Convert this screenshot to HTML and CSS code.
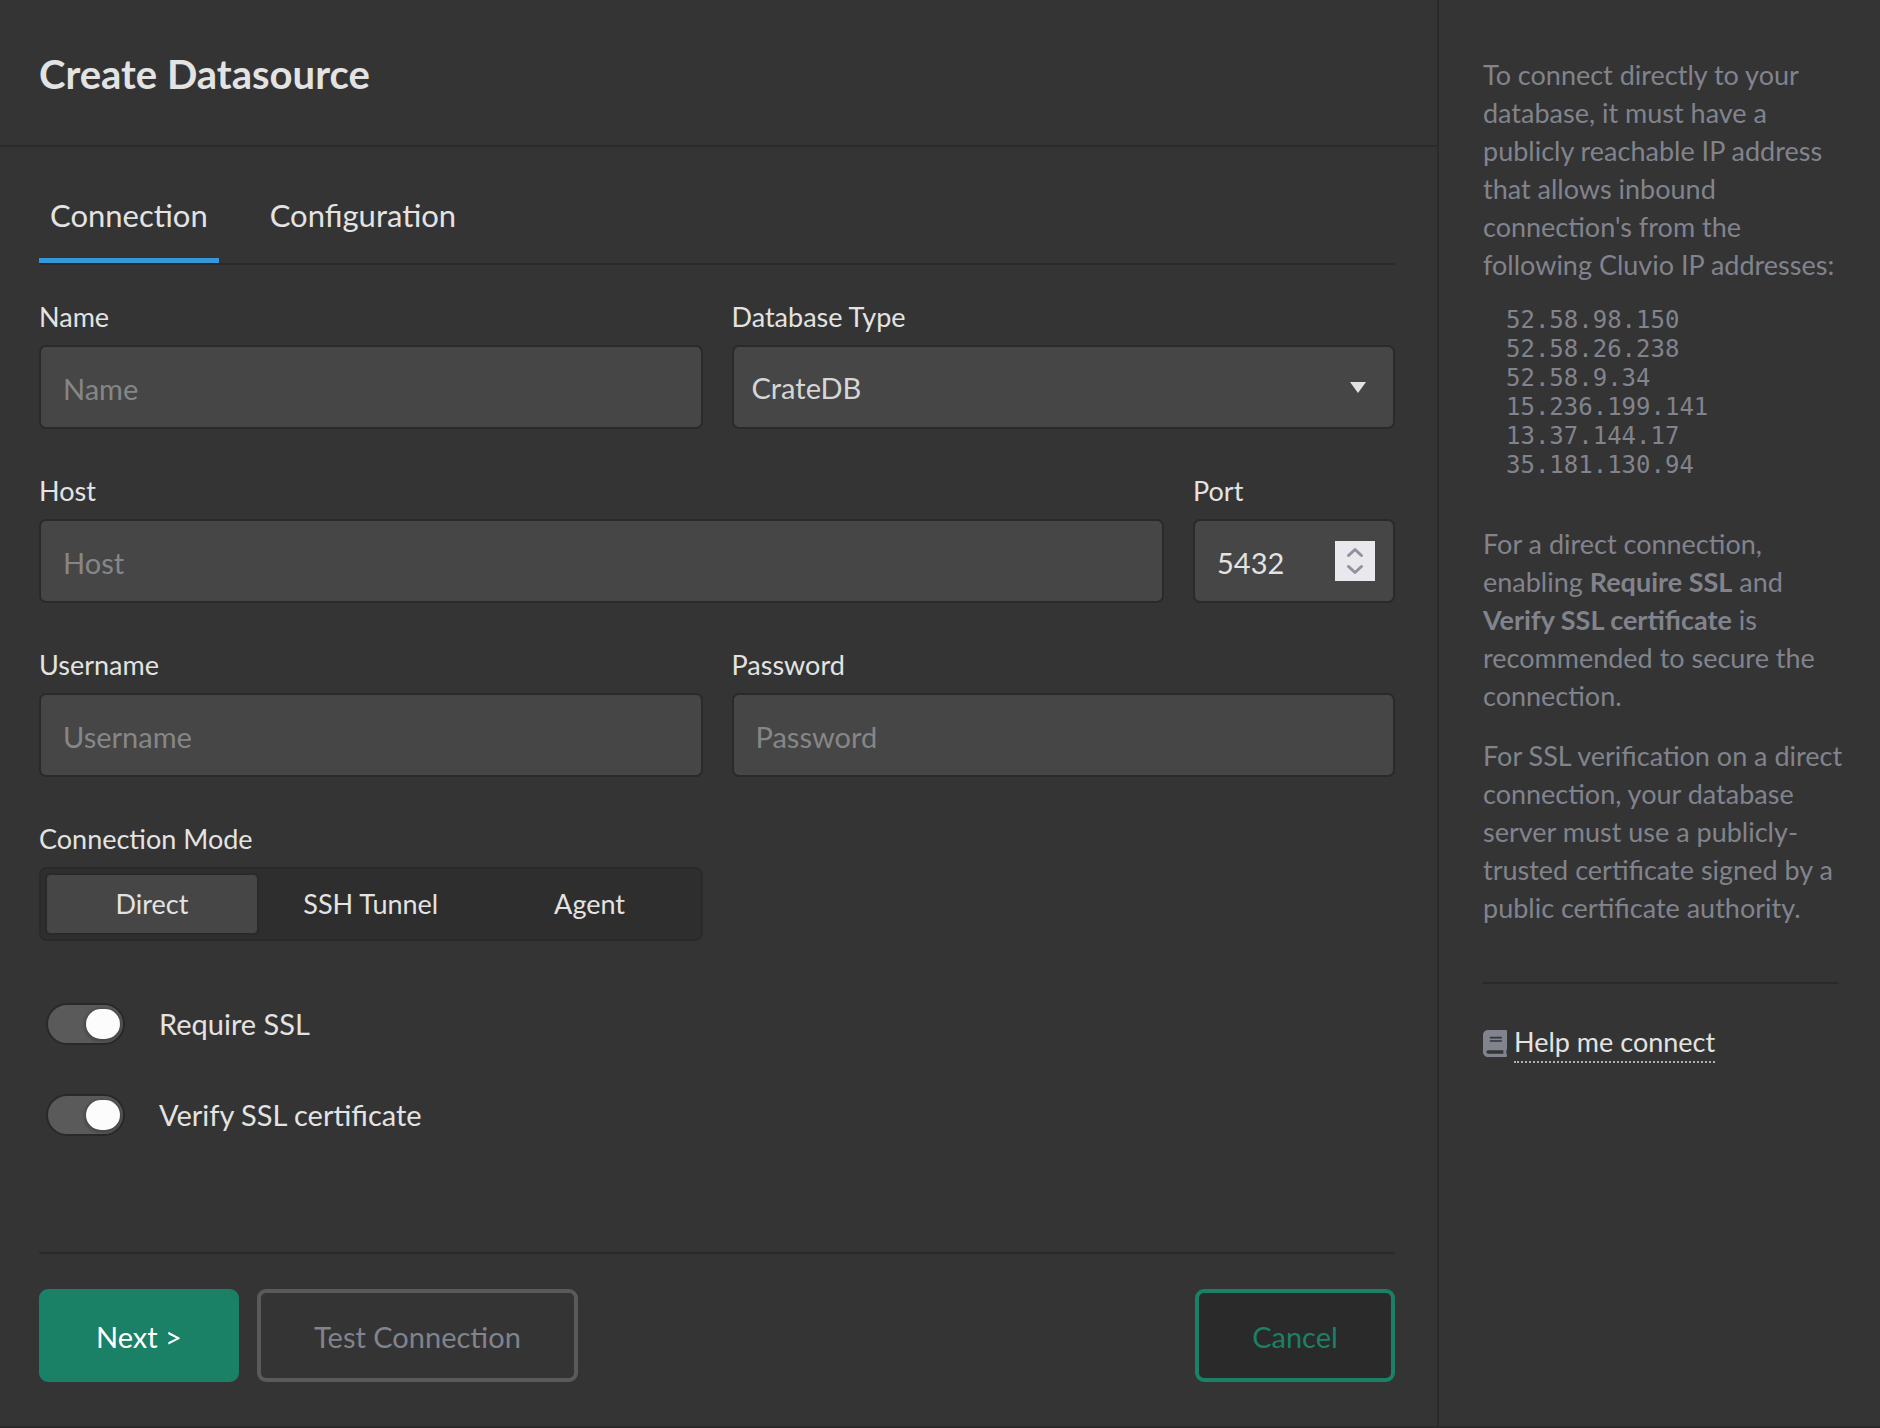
FILE: index.html
```html
<!DOCTYPE html>
<html lang="en">
<head>
<meta charset="utf-8">
<title>Create Datasource</title>
<meta name="viewport" content="width=device-width, initial-scale=1">
<link rel="stylesheet" href="styles.css">
</head>
<body>
<div class="page">
  <main class="main">
    <header class="header">
      <h1 class="title">Create Datasource</h1>
    </header>
    <form class="form">
      <nav class="tabs">
        <a class="tab tab-active" href="#connection">Connection</a>
        <a class="tab" href="#configuration">Configuration</a>
      </nav>

      <div class="fields">
        <div class="row">
          <div class="field">
            <label class="label" for="name">Name</label>
            <input class="input" id="name" type="text" placeholder="Name">
          </div>
          <div class="field">
            <label class="label" for="dbtype">Database Type</label>
            <div class="control">
              <select class="input select" id="dbtype">
                <option>CrateDB</option>
              </select>
              <svg class="caret" viewBox="0 0 16 11" aria-hidden="true"><path d="M0 0h16L8 11z" fill="currentColor"/></svg>
            </div>
          </div>
        </div>

        <div class="row row-host">
          <div class="field">
            <label class="label" for="host">Host</label>
            <input class="input" id="host" type="text" placeholder="Host">
          </div>
          <div class="field">
            <label class="label" for="port">Port</label>
            <div class="control">
              <input class="input number" id="port" type="number" value="5432">
              <svg class="spinner" viewBox="0 0 40 40" aria-hidden="true"><path d="M13.500 14.500 20 8.500l6.500 6M13.500 25.500l6.500 6 6.500-6" fill="none" stroke="currentColor" stroke-width="3" stroke-linecap="round" stroke-linejoin="round"/></svg>
            </div>
          </div>
        </div>

        <div class="row">
          <div class="field">
            <label class="label" for="username">Username</label>
            <input class="input" id="username" type="text" placeholder="Username">
          </div>
          <div class="field">
            <label class="label" for="password">Password</label>
            <input class="input" id="password" type="password" placeholder="Password">
          </div>
        </div>

        <div class="row">
          <div class="field">
            <span class="label" id="mode">Connection Mode</span>
            <div class="segments" role="group" aria-labelledby="mode">
              <button class="segment segment-active" type="button">Direct</button>
              <button class="segment" type="button">SSH Tunnel</button>
              <button class="segment" type="button">Agent</button>
            </div>
          </div>
        </div>
      </div>

      <div class="switches">
        <label class="switch-row"><input class="switch" type="checkbox" checked>Require SSL</label>
        <label class="switch-row"><input class="switch" type="checkbox" checked>Verify SSL certificate</label>
      </div>

      <div class="actions">
        <button class="button button-primary" type="submit">Next &gt;</button>
        <button class="button button-muted" type="button">Test Connection</button>
        <button class="button button-cancel" type="button">Cancel</button>
      </div>
    </form>
  </main>

  <aside class="sidebar">
    <p class="note">To connect directly to your database, it must have a publicly reachable IP address that allows inbound connection's from the following Cluvio IP addresses:</p>
    <pre class="addresses">52.58.98.150
52.58.26.238
52.58.9.34
15.236.199.141
13.37.144.17
35.181.130.94</pre>
    <p class="note">For a direct connection, enabling <strong>Require SSL</strong> and <strong>Verify SSL certificate</strong> is recommended to secure the connection.</p>
    <p class="note">For SSL verification on a direct connection, your database server must use a publicly-trusted certificate signed by a public certificate authority.</p>
    <div class="help">
      <svg class="book" viewBox="0 0 448 512" preserveAspectRatio="none" aria-hidden="true"><path fill="currentColor" d="M448 360V24c0-13.300-10.700-24-24-24H96C43 0 0 43 0 96v320c0 53 43 96 96 96h328c13.300 0 24-10.700 24-24v-16c0-7.500-3.500-14.300-8.900-18.700-4.200-15.400-4.200-59.300 0-74.700 5.400-4.300 8.900-11.100 8.900-18.600zM128 134c0-3.300 2.700-6 6-6h212c3.300 0 6 2.700 6 6v20c0 3.300-2.700 6-6 6H134c-3.300 0-6-2.700-6-6v-20zm0 64c0-3.300 2.700-6 6-6h212c3.300 0 6 2.700 6 6v20c0 3.300-2.700 6-6 6H134c-3.300 0-6-2.700-6-6v-20zm253.400 250H96c-17.700 0-32-14.300-32-32 0-17.600 14.400-32 32-32h285.400c-1.900 17.100-1.900 46.900 0 64z"/></svg>
      <a class="help-link" href="#help">Help me connect</a>
    </div>
  </aside>
</div>
</body>
</html>
```
FILE: styles.css
```css
:root {
  --bg: #343434;
  --line: #2a2a2a;
  --field: #464646;
  --text: #e3e3e3;
  --muted: #81838d;
  --green: #1a8066;
}

* {
  box-sizing: border-box;
}

body {
  margin: 0;
  background: var(--bg);
  color: var(--text);
  font-family: Lato, "Liberation Sans", sans-serif;
  font-size: 27px;
  line-height: 38px;
}

input,
select,
button {
  font: inherit;
  color: inherit;
}

.page {
  display: grid;
  grid-template-columns: 1fr 443px;
  min-height: 100vh;
  border-bottom: 2px solid var(--line);
}

.main {
  display: flex;
  flex-direction: column;
  min-width: 0;
}

.header {
  padding: 50px 39px 47px;
  border-bottom: 2px solid var(--line);
}

.title {
  margin: 0;
  font-size: 40px;
  line-height: 48px;
  font-weight: 700;
}

.form {
  flex: 1;
  display: flex;
  flex-direction: column;
  padding: 48px 42px 44px 39px;
}

.tabs {
  display: flex;
  gap: 40px;
  border-bottom: 2px solid var(--line);
}

.tab {
  padding: 0 11px 23px;
  border-bottom: 5px solid transparent;
  font-size: 31px;
  line-height: 40px;
  color: var(--text);
  text-decoration: none;
}

.tab-active {
  border-bottom-color: #3498db;
}

.fields {
  display: flex;
  flex-direction: column;
  gap: 46px;
  padding-top: 36px;
}

.row {
  display: grid;
  grid-template-columns: 1fr 1fr;
  gap: 29px;
}

.row-host {
  grid-template-columns: 1fr 202px;
}

.field {
  display: flex;
  flex-direction: column;
  gap: 12px;
  min-width: 0;
}

.label {
  line-height: 32px;
}

.control {
  display: grid;
  align-items: center;
}

.control > * {
  grid-area: 1 / 1;
}

.input {
  width: 100%;
  height: 84px;
  padding: 2px 22px 0;
  border: 2px solid var(--line);
  border-radius: 7px;
  background: var(--field);
  font-size: 29px;
  outline: none;
}

.input::placeholder {
  color: #868686;
  opacity: 1;
}

.select {
  appearance: none;
  padding: 2px 18px 0;
  color: #d6d6d6;
}

.caret {
  width: 16px;
  height: 11px;
  margin-right: 29px;
  justify-self: end;
  pointer-events: none;
}

.number {
  appearance: textfield;
}

.number::-webkit-inner-spin-button {
  display: none;
}

.spinner {
  width: 40px;
  height: 40px;
  margin-right: 20px;
  justify-self: end;
  background: #e9e9ed;
  color: #9090a0;
}

.segments {
  display: grid;
  grid-template-columns: repeat(3, 1fr);
  gap: 5px;
  height: 74px;
  padding: 4px;
  border: 2px solid var(--line);
  border-radius: 8px;
  background: #2e2e2e;
}

.segment {
  padding: 0;
  border: 2px solid transparent;
  border-radius: 6px;
  background: none;
}

.segment-active {
  border-color: var(--line);
  background: var(--field);
}

.switches {
  display: flex;
  flex-direction: column;
  align-items: flex-start;
  gap: 49px;
  padding: 62px 7px;
}

.switch-row {
  display: flex;
  align-items: center;
  gap: 34px;
  height: 42px;
  font-size: 29px;
}

.switch {
  appearance: none;
  display: flex;
  align-items: center;
  justify-content: flex-end;
  width: 79px;
  height: 42px;
  margin: 0;
  padding-right: 3px;
  border: 2px solid #292929;
  border-radius: 21px;
  background: #5a5a5a;
}

.switch::before {
  content: "";
  width: 34px;
  height: 30px;
  border-radius: 15px;
  background: #fcfcfc;
  box-shadow: 0 1px 3px 2px rgba(0, 0, 0, 0.2);
}

.actions {
  display: flex;
  gap: 18px;
  margin-top: auto;
  padding-top: 35px;
  border-top: 2px solid var(--line);
}

.button {
  min-width: 200px;
  height: 93px;
  padding: 2px 53px 0;
  border: 4px solid var(--green);
  border-radius: 9px;
  font-size: 29px;
}

.button-primary {
  background: var(--green);
  color: #fff;
}

.button-muted {
  border-color: #5a5a5a;
  background: none;
  color: var(--muted);
}

.button-cancel {
  margin-left: auto;
  background: #2a2a2a;
  color: var(--green);
}

.sidebar {
  padding: 56px 41px 44px 44px;
  border-left: 2px solid var(--line);
  color: var(--muted);
}

.note {
  margin: 0 -8px 22px 0;
}

.addresses {
  margin: 0 0 45px;
  padding-left: 23px;
  font-family: "DejaVu Sans Mono", monospace;
  font-size: 24px;
  line-height: 29px;
}

.help {
  display: flex;
  align-items: center;
  gap: 7px;
  margin-top: 55px;
  padding-top: 39px;
  border-top: 2px solid var(--line);
}

.book {
  width: 24px;
  height: 27px;
}

.help-link {
  border-bottom: 2px dotted #b0b0b0;
  color: var(--text);
  text-decoration: none;
}
```
